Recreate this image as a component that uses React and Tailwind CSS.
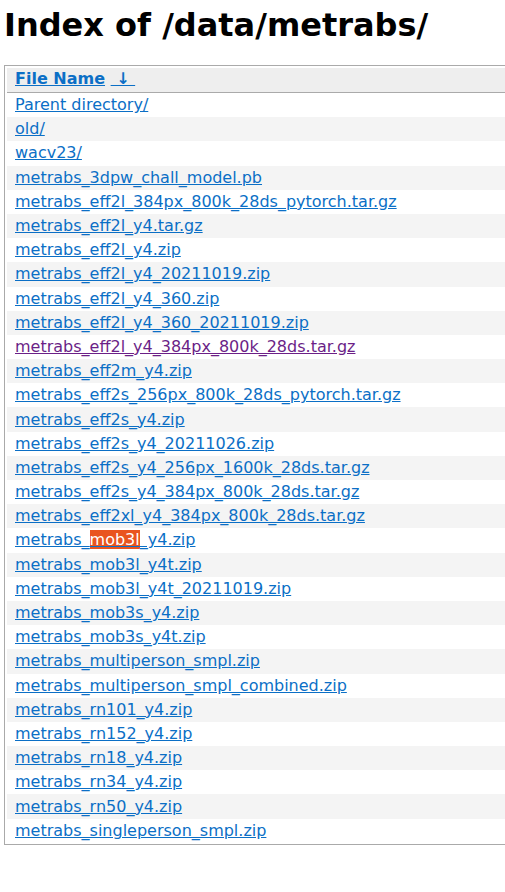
import React from 'react';

const files = [
  'Parent directory/',
  'old/',
  'wacv23/',
  'metrabs_3dpw_chall_model.pb',
  'metrabs_eff2l_384px_800k_28ds_pytorch.tar.gz',
  'metrabs_eff2l_y4.tar.gz',
  'metrabs_eff2l_y4.zip',
  'metrabs_eff2l_y4_20211019.zip',
  'metrabs_eff2l_y4_360.zip',
  'metrabs_eff2l_y4_360_20211019.zip',
  'metrabs_eff2l_y4_384px_800k_28ds.tar.gz',
  'metrabs_eff2m_y4.zip',
  'metrabs_eff2s_256px_800k_28ds_pytorch.tar.gz',
  'metrabs_eff2s_y4.zip',
  'metrabs_eff2s_y4_20211026.zip',
  'metrabs_eff2s_y4_256px_1600k_28ds.tar.gz',
  'metrabs_eff2s_y4_384px_800k_28ds.tar.gz',
  'metrabs_eff2xl_y4_384px_800k_28ds.tar.gz',
  'metrabs_mob3l_y4.zip',
  'metrabs_mob3l_y4t.zip',
  'metrabs_mob3l_y4t_20211019.zip',
  'metrabs_mob3s_y4.zip',
  'metrabs_mob3s_y4t.zip',
  'metrabs_multiperson_smpl.zip',
  'metrabs_multiperson_smpl_combined.zip',
  'metrabs_rn101_y4.zip',
  'metrabs_rn152_y4.zip',
  'metrabs_rn18_y4.zip',
  'metrabs_rn34_y4.zip',
  'metrabs_rn50_y4.zip',
  'metrabs_singleperson_smpl.zip',
];

const visited = 'metrabs_eff2l_y4_384px_800k_28ds.tar.gz';
const found = 'metrabs_mob3l_y4.zip';

const FileLink = ({ name }) => {
  const color = name === visited ? 'text-[#6b1f87]' : 'text-[#0b6fc6]';
  if (name === found) {
    return (
      <a href="#" className={`${color} underline`}>
        metrabs_<span className="bg-[#e95420] text-white">mob3l</span>_y4.zip
      </a>
    );
  }
  return (
    <a href="#" className={`${color} underline`}>
      {name}
    </a>
  );
};

const App = () => {
  return (
    <div className="w-[505px] h-[892px] overflow-hidden bg-white text-black font-['DejaVu_Sans',sans-serif] px-[4px]">
      <h1 className="text-[32px] font-bold leading-[37px] pt-[7px] mb-[21px] whitespace-nowrap">
        Index of /data/metrabs/
      </h1>

      <div className="w-[640px] border border-[#aaaaaa] px-[2px] pt-[2px] pb-[1px] text-[16px]">
        {/* Header */}
        <div className="bg-[#eeeeee] border-b border-[#aaaaaa] h-[25px] flex items-start leading-[22px] px-[8px] font-bold whitespace-nowrap">
          <a href="#" className="text-[#0b6fc6] underline">File Name</a>
          <span>&nbsp;</span>
          <a href="#" className="text-[#0b6fc6] underline">&nbsp;↓&nbsp;</a>
        </div>

        {/* Rows */}
        {files.map((name, i) => (
          <div
            key={name}
            className={`h-[24.2px] flex items-center px-[8px] whitespace-nowrap ${i % 2 === 1 ? 'bg-[#f4f4f4]' : 'bg-white'}`}
          >
            <FileLink name={name} />
          </div>
        ))}
      </div>
    </div>
  );
};

export default App;
